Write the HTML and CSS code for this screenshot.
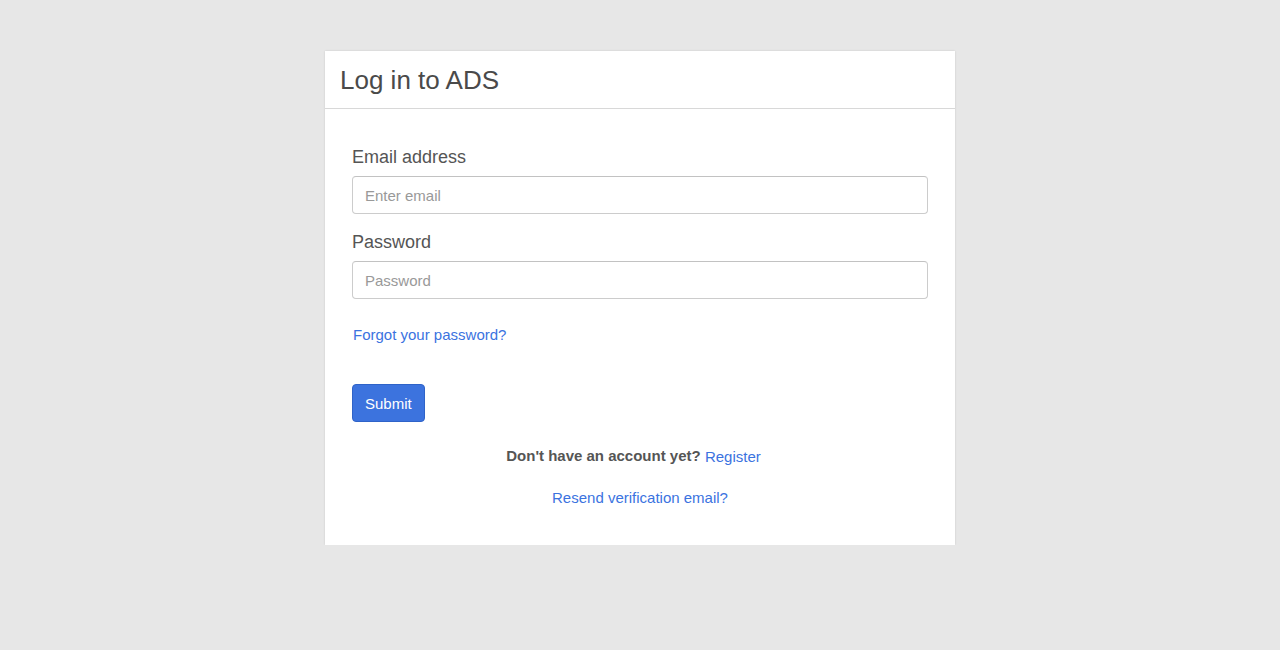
FILE: index.html
```html
<!DOCTYPE html>
<html lang="en">
<head>
<meta charset="utf-8">
<title>Log in to ADS</title>
<link rel="stylesheet" href="styles.css">
</head>
<body>
<main class="page">
  <section class="card">
    <header class="card-header">
      <h1 class="card-title">Log in to ADS</h1>
    </header>
    <form class="card-body">
      <div class="field">
        <label class="label" for="email">Email address</label>
        <input class="input" id="email" type="email" placeholder="Enter email">
      </div>
      <div class="field">
        <label class="label" for="password">Password</label>
        <input class="input" id="password" type="password" placeholder="Password">
      </div>
      <div class="forgot"><a class="link" href="#">Forgot your password?</a></div>
      <div class="actions"><button class="btn" type="button">Submit</button></div>
      <div class="register"><span class="strong">Don't have an account yet?</span> <a class="link" href="#">Register</a></div>
      <div class="resend"><a class="link" href="#">Resend verification email?</a></div>
    </form>
  </section>
</main>
</body>
</html>
```
FILE: styles.css
```css
html, body {
  margin: 0;
  padding: 0;
}
body {
  background: #e7e7e7;
  font-family: "Liberation Sans", Arial, sans-serif;
  color: #555;
}
.page {
  display: flex;
  justify-content: center;
  padding-top: 51px;
}
.card {
  width: 630px;
  background: #fff;
  box-shadow: 0 0 2px rgba(0,0,0,0.12);
}
.card-header {
  border-bottom: 1px solid #d8d8d8;
  padding: 11px 15px 10px;
}
.card-title {
  margin: 0;
  font-size: 26px;
  font-weight: 400;
  line-height: 36px;
  color: #4a4a4a;
}
.card-body {
  display: flex;
  flex-direction: column;
  padding: 37px 27px 38px;
}
.field {
  display: flex;
  flex-direction: column;
  margin-bottom: 17px;
}
.label {
  font-size: 18px;
  line-height: 22px;
  color: #555;
  margin-bottom: 8px;
}
.input {
  box-sizing: border-box;
  height: 38px;
  padding: 0 12px;
  border: 1px solid #cccccc;
  border-top-color: #c2c2c2;
  border-radius: 4px;
  font-family: "Liberation Sans", Arial, sans-serif;
  font-size: 15px;
  color: #555;
  background: #fff;
}
.input::placeholder {
  color: #999;
}
.forgot {
  margin-top: 10px;
  padding-left: 1px;
  font-size: 15px;
  line-height: 18px;
}
.link {
  color: #3b73df;
  text-decoration: none;
}
.actions {
  margin-top: 40px;
}
.btn {
  box-sizing: border-box;
  height: 38px;
  padding: 0 12px;
  border: 1px solid #2f63c8;
  border-radius: 4px;
  background: #3c73de;
  color: #fff;
  font-family: "Liberation Sans", Arial, sans-serif;
  font-size: 15px;
}
.register {
  margin-top: 25px;
  padding-right: 13px;
  text-align: center;
  font-size: 15px;
  line-height: 18px;
}
.strong {
  font-weight: 700;
  color: #555;
}
.register .link {
  position: relative;
  top: 1px;
}
.resend {
  margin-top: 24px;
  text-align: center;
  font-size: 15px;
  line-height: 18px;
}
```
